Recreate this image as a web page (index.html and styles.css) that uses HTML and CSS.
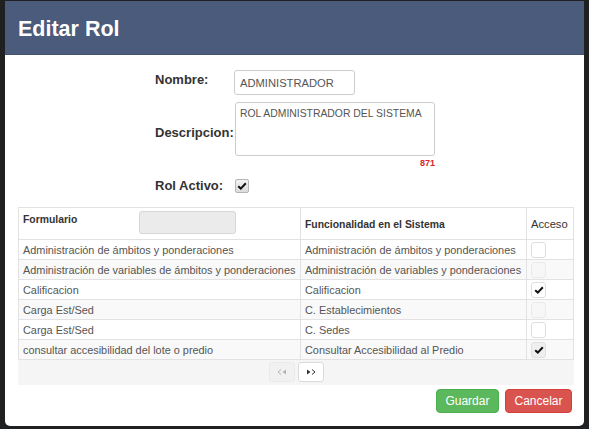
FILE: index.html
```html
<!DOCTYPE html>
<html lang="es">
<head>
<meta charset="utf-8">
<title>Editar Rol</title>
<link rel="stylesheet" href="styles.css">
</head>
<body>
<div class="modal">
  <div class="modal-header"><h1>Editar Rol</h1></div>
  <div class="modal-body">
    <div class="form">
      <div class="frow r-nombre">
        <label class="lbl">Nombre:</label>
        <input class="field f-nombre" type="text" value="ADMINISTRADOR">
      </div>
      <div class="frow r-desc">
        <label class="lbl lbl-desc">Descripcion:</label>
        <textarea class="field f-desc">ROL ADMINISTRADOR DEL SISTEMA</textarea>
      </div>
      <div class="frow r-count">
        <span class="lbl"></span>
        <span class="counter">871</span>
      </div>
      <div class="frow r-activo">
        <label class="lbl">Rol Activo:</label>
        <span class="cb cb-form checked"><svg viewBox="0 0 10 8" width="10" height="8"><path d="M1.2 4.2 L3.8 6.6 L8.8 1.2" fill="none" stroke="#111" stroke-width="2"/></svg></span>
      </div>
    </div>

    <table class="grid">
      <colgroup><col class="c1"><col class="c2"><col class="c3"></colgroup>
      <thead>
        <tr>
          <th class="th-form"><div class="th-inner"><span class="th-text">Formulario</span><span class="filter"></span></div></th>
          <th>Funcionalidad en el Sistema</th>
          <th class="th-acc">Acceso</th>
        </tr>
      </thead>
      <tbody>
        <tr><td>Administración de ámbitos y ponderaciones</td><td>Administración de ámbitos y ponderaciones</td><td class="cc"><span class="cb"></span></td></tr>
        <tr><td>Administración de variables de ámbitos y ponderaciones</td><td>Administración de variables y ponderaciones</td><td class="cc"><span class="cb"></span></td></tr>
        <tr><td>Calificacion</td><td>Calificacion</td><td class="cc"><span class="cb checked"><svg viewBox="0 0 10 8" width="10" height="8"><path d="M1.2 4.2 L3.8 6.6 L8.8 1.2" fill="none" stroke="#111" stroke-width="2"/></svg></span></td></tr>
        <tr><td>Carga Est/Sed</td><td>C. Establecimientos</td><td class="cc"><span class="cb"></span></td></tr>
        <tr><td>Carga Est/Sed</td><td>C. Sedes</td><td class="cc"><span class="cb"></span></td></tr>
        <tr><td>consultar accesibilidad del lote o predio</td><td>Consultar Accesibilidad al Predio</td><td class="cc"><span class="cb checked"><svg viewBox="0 0 10 8" width="10" height="8"><path d="M1.2 4.2 L3.8 6.6 L8.8 1.2" fill="none" stroke="#111" stroke-width="2"/></svg></span></td></tr>
      </tbody>
      <tfoot>
        <tr>
          <td colspan="3" class="pager-cell">
            <div class="pager">
              <span class="pbtn disabled"><svg viewBox="0 0 10 6" width="10" height="6"><path d="M4 0.5 L1 3 L4 5.5" fill="none" stroke="#999" stroke-width="1"/><path d="M9 0.5 L5.5 3 L9 5.5 Z" fill="#999"/></svg></span>
              <span class="pbtn"><svg viewBox="0 0 10 6" width="10" height="6"><path d="M1 0.5 L4.5 3 L1 5.5 Z" fill="#333"/><path d="M6 0.5 L9 3 L6 5.5" fill="none" stroke="#333" stroke-width="1"/></svg></span>
            </div>
          </td>
        </tr>
      </tfoot>
    </table>

    <div class="actions">
      <button class="btn btn-save" type="button">Guardar</button>
      <button class="btn btn-cancel" type="button">Cancelar</button>
    </div>
  </div>
</div>
</body>
</html>
```
FILE: styles.css
```css
html, body {
  margin: 0;
  background: #1f2022;
}
body {
  padding: 1px 5px 0 5px;
  font-family: "Liberation Sans", Arial, sans-serif;
}
.modal {
  width: 579px;
  background: #fff;
  border-radius: 0 0 5px 5px;
  overflow: hidden;
}
.modal-header {
  height: 54px;
  box-sizing: border-box;
  background: #4b5b7b;
  border-bottom: 1px solid #43526f;
  padding: 3px 0 0 13px;
  display: flex;
  align-items: center;
}
.modal-header h1 {
  margin: 0;
  color: #fff;
  font-size: 21.5px;
  font-weight: bold;
}
.modal-body {
  padding: 15px 11px 13px 13px;
}
.form {
  margin-left: 137px;
}
.frow {
  display: flex;
  align-items: flex-start;
}
.lbl {
  width: 79px;
  flex: none;
  font-size: 13px;
  font-weight: bold;
  color: #333;
  line-height: 16px;
}
.r-nombre .lbl { padding-top: 2px; }
.r-desc { margin-top: 7px; }
.lbl-desc { padding-top: 23px; }
.field {
  box-sizing: border-box;
  border: 1px solid #ccc;
  border-radius: 3px;
  font-family: "Liberation Sans", Arial, sans-serif;
  color: #555;
  background: #fff;
  margin: 0;
  outline: none;
}
.f-nombre {
  width: 121px;
  height: 25px;
  padding: 0 5px;
  font-size: 11.2px;
}
.f-desc {
  width: 200px;
  height: 54px;
  margin-left: 1px;
  padding: 4px 4px;
  font-size: 10.4px;
  line-height: 13px;
  resize: none;
}
.r-count { margin-top: 2px; }
.counter {
  width: 201px;
  text-align: right;
  font-size: 9px;
  font-weight: bold;
  color: #d9262c;
  line-height: 11px;
}
.r-activo {
  margin-top: 9px;
  align-items: center;
}
.cb {
  display: flex;
  align-items: center;
  justify-content: center;
  box-sizing: border-box;
  width: 15px;
  height: 16px;
  border: 1px solid #dedede;
  border-radius: 3px;
  background: #fff;
}
.cb-form {
  width: 14px;
  height: 14px;
  margin-left: 1px;
  border-color: #b5b5b5;
  border-radius: 2px;
  background: linear-gradient(#f2f2f2, #dcdcdc);
}
.grid {
  width: 555px;
  margin-top: 13px;
  border-collapse: collapse;
  table-layout: fixed;
  font-size: 10.9px;
  color: #555;
}
.c1 { width: 282px; }
.c2 { width: 226px; }
.c3 { width: 47px; }
.grid th, .grid td {
  border: 1px solid #e2e2e2;
  padding: 0 4px;
  text-align: left;
  white-space: nowrap;
  overflow: hidden;
}
.grid th {
  height: 28px;
  font-size: 10.4px;
  font-weight: bold;
  color: #333;
  vertical-align: middle;
  padding-top: 1px;
}
.grid .th-acc {
  font-weight: normal;
  font-size: 11.2px;
}
.grid .th-form {
  vertical-align: top;
  padding-top: 3px;
}
.th-inner {
  display: grid;
  grid-template-columns: 116px 97px;
  align-items: start;
}
.th-text {
  padding-top: 2px;
  line-height: 14px;
}
.filter {
  height: 23px;
  box-sizing: border-box;
  border: 1px solid #d6d6d6;
  border-radius: 3px;
  background: #ebebeb;
}
.grid tbody td {
  height: 19px;
  line-height: 14px;
}
.grid tbody tr:nth-child(even) td {
  background: #f9f9f9;
}
.grid tbody tr:nth-child(even) .cb {
  background: #f7f7f7;
  border-color: #eaeaea;
}
.grid tbody tr:nth-child(6) .cb {
  background: #efefef;
  border-color: #e0e0e0;
}
.grid .cc {
  padding-left: 4px;
}
.pager-cell {
  height: 24px;
  background: #f5f5f5;
  border-left-color: #f5f5f5 !important;
  border-right-color: #f5f5f5 !important;
  border-bottom-color: #f5f5f5 !important;
}
.pager {
  display: flex;
  justify-content: center;
  gap: 3px;
  padding-left: 1px;
}
.pbtn {
  display: flex;
  align-items: center;
  justify-content: center;
  box-sizing: border-box;
  width: 26px;
  height: 20px;
  border: 1px solid #dadada;
  border-radius: 3px;
  background: #fff;
}
.pbtn.disabled {
  background: #f0f0f0;
  border-color: #e6e6e6;
  opacity: 0.7;
}
.actions {
  display: flex;
  justify-content: flex-end;
  gap: 6px;
  margin-top: 4px;
  margin-right: 1px;
}
.btn {
  height: 24px;
  padding: 0 8.5px;
  border: none;
  border-radius: 4px;
  font-family: "Liberation Sans", Arial, sans-serif;
  font-size: 12px;
  color: #fff;
}
.btn-save {
  background: #5cb85c;
  border: 1px solid #4cae4c;
}
.btn-cancel {
  background: #d9534f;
  border: 1px solid #d43f3a;
}
```
